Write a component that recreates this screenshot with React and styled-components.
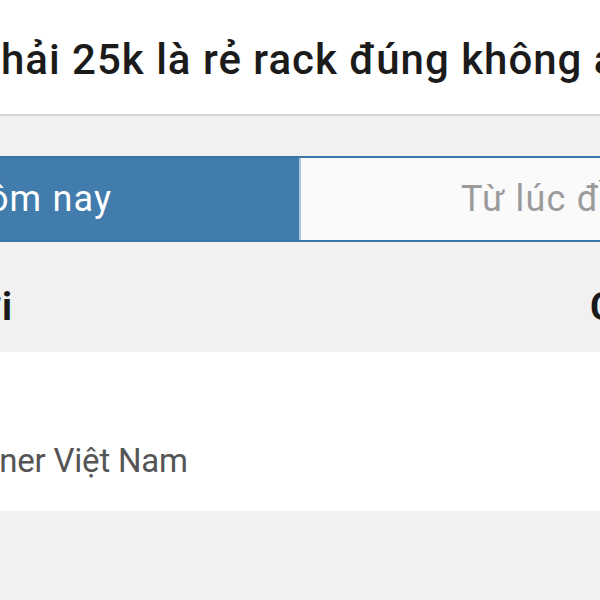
import React from "react";
import styled, { createGlobalStyle } from "styled-components";

const GlobalStyle = createGlobalStyle`
  html, body {
    margin: 0;
    padding: 0;
    background: #f1f1f1;
  }
  body {
    font-family: Roboto, "Noto Sans", "Liberation Sans", sans-serif;
    overflow: hidden;
  }
`;

function App() {
  return (
    <Viewport>
      <GlobalStyle />
      <Page>
        <Header>
          <Title>Không phải 25k là rẻ rack đúng không anh em</Title>
        </Header>

        <TabArea>
          <TabBar>
            <Tab active>Hôm nay</Tab>
            <Tab>Từ lúc đầu</Tab>
          </TabBar>
        </TabArea>

        <SectionHead>
          <HeadLabel>Người gửi</HeadLabel>
          <HeadLabel>Chủ đề</HeadLabel>
        </SectionHead>

        <MemberRow>
          <MemberName>Trainer Việt Nam</MemberName>
        </MemberRow>

        <Footer />
      </Page>
    </Viewport>
  );
}

export default App;

const Viewport = styled.div`
  width: 600px;
  height: 600px;
  overflow: hidden;
  background: #f1f1f1;
`;

// the screenshot is a crop of a wider page, so the page is shifted left
const Page = styled.div`
  width: 998px;
  margin-left: -199px;
`;

const Header = styled.header`
  height: 74px;
  padding: 40px 0 0 38px;
  background: #ffffff;
  border-bottom: 2px solid #d5d5d5;
`;

const Title = styled.h1`
  margin: 0;
  font-size: 42px;
  line-height: 40px;
  font-weight: 500;
  letter-spacing: 1px;
  color: #1b1b1b;
  white-space: nowrap;
`;

const TabArea = styled.div`
  padding-top: 40px;
`;

const TabBar = styled.div`
  display: flex;
  height: 86px;
  box-sizing: border-box;
  border-top: 2px solid #3b74a6;
  border-bottom: 2px solid #3b74a6;
`;

const Tab = styled.div`
  flex: 1;
  display: flex;
  align-items: center;
  padding-left: 160px;
  font-size: 36px;
  letter-spacing: 1.2px;
  white-space: nowrap;
  color: ${(p) => (p.active ? "#ffffff" : "#9b9b9b")};
  background: ${(p) => (p.active ? "#417cad" : "#fafafa")};
  border-left: ${(p) => (p.active ? "none" : "2px solid #a9c5de")};
`;

const SectionHead = styled.div`
  display: flex;
  gap: 575px;
  height: 110px;
  box-sizing: border-box;
  padding: 46px 0 0 19px;
`;

const HeadLabel = styled.div`
  font-size: 38px;
  line-height: 38px;
  font-weight: 700;
  letter-spacing: 3px;
  color: #1a1a1a;
  white-space: nowrap;
`;

const MemberRow = styled.div`
  height: 159px;
  box-sizing: border-box;
  padding: 92px 0 0 144px;
  background: #ffffff;
`;

const MemberName = styled.div`
  font-size: 33px;
  line-height: 33px;
  letter-spacing: -0.2px;
  color: #555555;
  white-space: nowrap;
`;

const Footer = styled.div`
  height: 120px;
  background: #f1f1f1;
`;
